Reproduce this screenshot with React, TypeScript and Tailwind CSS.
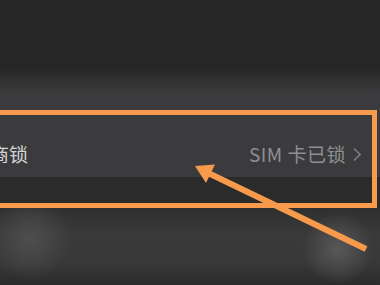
export default function App() {
  return (
    <div
      className="relative w-[380px] h-[285px] overflow-hidden bg-[#262626] flex flex-col"
      style={{ fontFamily: '"Noto Sans CJK SC", "Noto Sans", sans-serif' }}
    >
      <div className="h-[68px] shrink-0 bg-[#262626]" />
      <div className="h-[24px] shrink-0 bg-gradient-to-b from-[#262626] to-[#3a3a3c]" />

      {/* settings row */}
      <div className="h-[85px] shrink-0 bg-[#3b3b3d] flex items-end pb-[12px] pr-[18px]">
        <span className="-ml-[48px] text-[19px] leading-[22px] text-[#d4d4d6]">运营商锁</span>
        <div className="ml-auto flex items-center gap-[6px]">
          <span className="text-[19px] leading-[22px] tracking-[0.5px] text-[#8e8e93]">SIM 卡已锁</span>
          <svg width="10" height="15" viewBox="0 0 10 15" fill="none">
            <polyline points="2,1.5 8,7.5 2,13.5" stroke="#7c7c80" strokeWidth="1.7" />
          </svg>
        </div>
      </div>

      <div className="h-[30px] shrink-0 bg-[#2b2b2b]" />

      <div className="flex-1 bg-[radial-gradient(circle_at_30px_32px,#4e4e4e_0%,transparent_42px),radial-gradient(circle_at_338px_42px,#585858_0%,transparent_36px),linear-gradient(to_bottom,#2f2f2f,#3a3a3a_35%,#383838_70%,#2b2b2b)]" />

      {/* orange highlight box */}
      <div className="absolute left-[-10px] top-[110px] w-[387px] h-[98px] border-[5px] border-[#f79a4c]" />

      {/* arrow */}
      <svg className="absolute inset-0" width="380" height="285" viewBox="0 0 380 285">
        <line x1="204" y1="171" x2="366" y2="249" stroke="#f79a4c" strokeWidth="6" />
        <polygon points="195,166 215,164.5 206,183" fill="#f79a4c" />
      </svg>
    </div>
  )
}
